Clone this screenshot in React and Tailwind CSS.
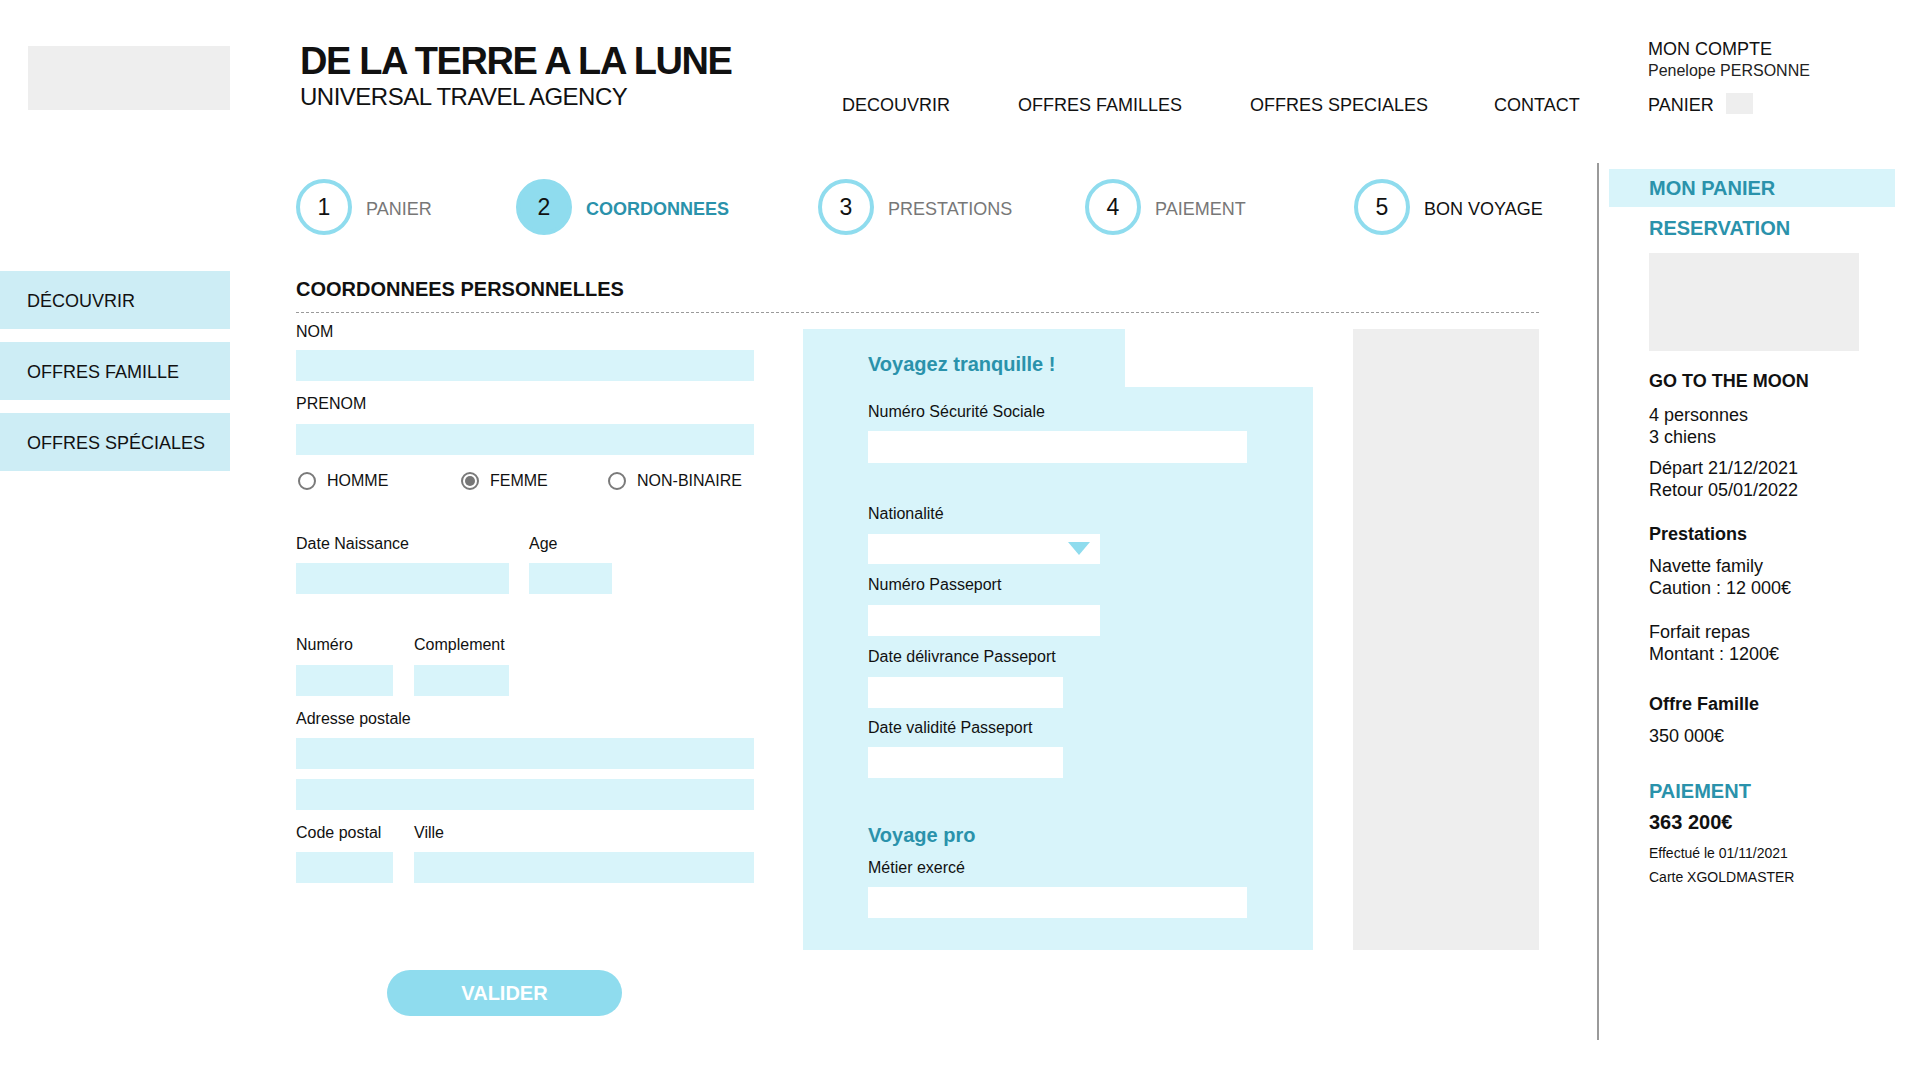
const NAV = [
  { label: "DECOUVRIR", w: "w-[176px]" },
  { label: "OFFRES FAMILLES", w: "w-[232px]" },
  { label: "OFFRES SPECIALES", w: "w-[244px]" },
  { label: "CONTACT", w: "w-[154px]" },
];

const STEPS = [
  { n: "1", label: "PANIER", w: "w-[220px]", state: "done" },
  { n: "2", label: "COORDONNEES", w: "w-[302px]", state: "active" },
  { n: "3", label: "PRESTATIONS", w: "w-[267px]", state: "todo" },
  { n: "4", label: "PAIEMENT", w: "w-[269px]", state: "todo" },
  { n: "5", label: "BON VOYAGE", w: "w-[200px]", state: "last" },
];

const SIDE = ["DÉCOUVRIR", "OFFRES FAMILLE", "OFFRES SPÉCIALES"];

function Label({ children, className = "" }) {
  return <div className={`text-[16px] leading-none text-[#111] ${className}`}>{children}</div>;
}

function Field({ className = "" }) {
  return <div className={`h-[31px] bg-[#d8f4fa] ${className}`} />;
}

function WhiteField({ className = "" }) {
  return <div className={`h-[31px] bg-white ${className}`} />;
}

function Radio({ label, checked, w }) {
  return (
    <div className={`flex items-center gap-[11px] ${w}`}>
      <span className="flex h-[18px] w-[18px] items-center justify-center rounded-full border-2 border-[#7a7a7a] bg-white">
        {checked && <span className="h-[10px] w-[10px] rounded-full bg-[#777]" />}
      </span>
      <span className="text-[16px] leading-none text-[#111]">{label}</span>
    </div>
  );
}

function Step({ step }) {
  const circle =
    step.state === "active"
      ? "bg-[#8fdcee] border-[#8fdcee]"
      : "bg-white border-[#8fdcee]";
  const text =
    step.state === "active"
      ? "text-[#2a92ab] font-bold"
      : step.state === "last"
      ? "text-[#111]"
      : "text-[#777]";
  return (
    <div className={`flex shrink-0 items-center gap-[14px] ${step.w}`}>
      <div className={`flex h-[56px] w-[56px] shrink-0 items-center justify-center rounded-full border-[4px] ${circle}`}>
        <span className="text-[23px] leading-none text-[#111]">{step.n}</span>
      </div>
      <span className={`mt-[4px] whitespace-nowrap text-[18px] leading-none ${text}`}>{step.label}</span>
    </div>
  );
}

export default function App() {
  return (
    <div className="h-[1080px] w-[1920px] overflow-hidden bg-white font-['Liberation_Sans',Arial,sans-serif] text-[#111]">
      {/* Header */}
      <header className="flex h-[163px] items-start">
        <div className="w-[300px] shrink-0 pl-[28px] pt-[46px]">
          <div className="h-[64px] w-[202px] bg-[#eeeeee]" />
        </div>
        <div className="w-[542px] shrink-0 pt-[42px]">
          <div className="text-[38px] font-bold leading-none tracking-[-1.4px]">DE LA TERRE A LA LUNE</div>
          <div className="mt-[5px] text-[24px] leading-none tracking-[-0.5px]">UNIVERSAL TRAVEL AGENCY</div>
        </div>
        <nav className="flex pt-[96px]">
          {NAV.map((item) => (
            <a key={item.label} href="#" className={`${item.w} text-[18px] leading-none`}>
              {item.label}
            </a>
          ))}
        </nav>
        <div className="flex flex-col pt-[40px]">
          <div className="text-[18px] leading-none">MON COMPTE</div>
          <div className="mt-[5px] text-[16px] leading-none text-[#222]">Penelope PERSONNE</div>
          <div className="mt-[14px] flex h-[21px] items-center gap-[12px]">
            <span className="mt-[2px] text-[18px] leading-none">PANIER</span>
            <span className="h-[21px] w-[27px] bg-[#eeeeee]" />
          </div>
        </div>
      </header>

      {/* Body */}
      <div className="flex items-start">
        {/* Sidebar */}
        <aside className="flex w-[230px] shrink-0 flex-col gap-[13px] pt-[108px]">
          {SIDE.map((s) => (
            <div key={s} className="flex h-[58px] items-center bg-[#cdedf5] pl-[27px] pt-[2px] text-[18px] leading-none">
              {s}
            </div>
          ))}
        </aside>

        {/* Main */}
        <main className="ml-[66px] w-[1243px] shrink-0 pt-[16px]">
          <div className="flex h-[56px] items-center">
            {STEPS.map((s) => (
              <Step key={s.n} step={s} />
            ))}
          </div>

          <h2 className="mt-[44px] text-[20px] font-bold leading-none">COORDONNEES PERSONNELLES</h2>
          <div className="mt-[13px] border-t border-dashed border-[#9a9a9a]" />

          <div className="flex items-start">
            {/* Personal form */}
            <div className="w-[458px] shrink-0 pt-[11px]">
              <Label>NOM</Label>
              <Field className="mt-[10px]" />
              <Label className="mt-[15px]">PRENOM</Label>
              <Field className="mt-[12px]" />

              <div className="mt-[17px] flex pl-[2px]">
                <Radio label="HOMME" w="w-[163px]" />
                <Radio label="FEMME" checked w="w-[147px]" />
                <Radio label="NON-BINAIRE" />
              </div>

              <div className="mt-[46px] flex gap-[20px]">
                <div className="w-[213px]">
                  <Label>Date Naissance</Label>
                  <Field className="mt-[11px]" />
                </div>
                <div className="w-[83px]">
                  <Label>Age</Label>
                  <Field className="mt-[11px]" />
                </div>
              </div>

              <div className="mt-[43px] flex gap-[21px]">
                <div className="w-[97px]">
                  <Label>Numéro</Label>
                  <Field className="mt-[12px]" />
                </div>
                <div className="w-[95px]">
                  <Label>Complement</Label>
                  <Field className="mt-[12px]" />
                </div>
              </div>

              <Label className="mt-[15px]">Adresse postale</Label>
              <Field className="mt-[11px]" />
              <Field className="mt-[10px]" />

              <div className="mt-[15px] flex gap-[21px]">
                <div className="w-[97px]">
                  <Label>Code postal</Label>
                  <Field className="mt-[11px]" />
                </div>
                <div className="w-[340px]">
                  <Label>Ville</Label>
                  <Field className="mt-[11px]" />
                </div>
              </div>

              <button className="ml-[91px] mt-[87px] flex h-[46px] w-[235px] items-center justify-center rounded-full bg-[#8fdcee] text-[20px] font-bold leading-none text-white">
                VALIDER
              </button>
            </div>

            {/* Travel panel */}
            <div className="ml-[49px] mt-[16px] flex w-[510px] shrink-0 flex-col">
              <div className="h-[58px] w-[322px] bg-[#d8f4fa] pl-[65px] pt-[25px]">
                <div className="text-[20px] font-bold leading-none text-[#2a92ab]">Voyagez tranquille !</div>
              </div>
              <div className="h-[563px] bg-[#d8f4fa] pl-[65px] pt-[17px]">
                <Label>Numéro Sécurité Sociale</Label>
                <WhiteField className="mt-[11px] h-[32px] w-[379px]" />

                <Label className="mt-[43px]">Nationalité</Label>
                <div className="mt-[12px] flex h-[30px] w-[232px] items-start justify-end bg-white pr-[10px] pt-[8px]">
                  <svg width="22" height="13" viewBox="0 0 22 13">
                    <polygon points="0,0 22,0 11,13" fill="#8fdcee" />
                  </svg>
                </div>

                <Label className="mt-[13px]">Numéro Passeport</Label>
                <WhiteField className="mt-[12px] h-[30px] w-[232px]" />

                <Label className="mt-[13px]">Date délivrance Passeport</Label>
                <WhiteField className="mt-[12px] h-[30px] w-[195px]" />

                <Label className="mt-[12px]">Date validité Passeport</Label>
                <WhiteField className="mt-[11px] h-[30px] w-[195px]" />

                <div className="mt-[47px] text-[20px] font-bold leading-none text-[#2a92ab]">Voyage pro</div>
                <Label className="mt-[15px]">Métier exercé</Label>
                <WhiteField className="mt-[11px] h-[30px] w-[379px]" />
              </div>
            </div>

            <div className="ml-[40px] mt-[16px] h-[621px] w-[186px] shrink-0 bg-[#eeeeee]" />
          </div>
        </main>

        {/* Divider */}
        <div className="ml-[58px] h-[877px] w-[2px] shrink-0 bg-[#9a9a9a]" />

        {/* Cart */}
        <aside className="ml-[10px] w-[286px] shrink-0 pt-[6px]">
          <div className="flex h-[38px] items-center bg-[#d8f4fa] pl-[40px] text-[20px] font-bold leading-none text-[#2a92ab]">
            MON PANIER
          </div>
          <div className="pl-[40px]">
            <div className="mt-[11px] text-[20px] font-bold leading-none text-[#2a92ab]">RESERVATION</div>
            <div className="mt-[15px] h-[98px] w-[210px] bg-[#eeeeee]" />
            <div className="mt-[21px] text-[18px] font-bold leading-none">GO TO THE MOON</div>
            <div className="mt-[14px] text-[18px] leading-[22px]">
              <div>4 personnes</div>
              <div>3 chiens</div>
            </div>
            <div className="mt-[9px] text-[18px] leading-[22px]">
              <div>Départ 21/12/2021</div>
              <div>Retour 05/01/2022</div>
            </div>
            <div className="mt-[24px] text-[18px] font-bold leading-none">Prestations</div>
            <div className="mt-[12px] text-[18px] leading-[22px]">
              <div>Navette family</div>
              <div>Caution : 12 000€</div>
            </div>
            <div className="mt-[22px] text-[18px] leading-[22px]">
              <div>Forfait repas</div>
              <div>Montant : 1200€</div>
            </div>
            <div className="mt-[30px] text-[18px] font-bold leading-none">Offre Famille</div>
            <div className="mt-[12px] text-[18px] leading-[22px]">350 000€</div>
            <div className="mt-[34px] text-[20px] font-bold leading-none text-[#2a92ab]">PAIEMENT</div>
            <div className="mt-[11px] text-[20px] font-bold leading-none">363 200€</div>
            <div className="mt-[9px] text-[14px] leading-[24px]">
              <div>Effectué le 01/11/2021</div>
              <div>Carte XGOLDMASTER</div>
            </div>
          </div>
        </aside>
      </div>
    </div>
  );
}
